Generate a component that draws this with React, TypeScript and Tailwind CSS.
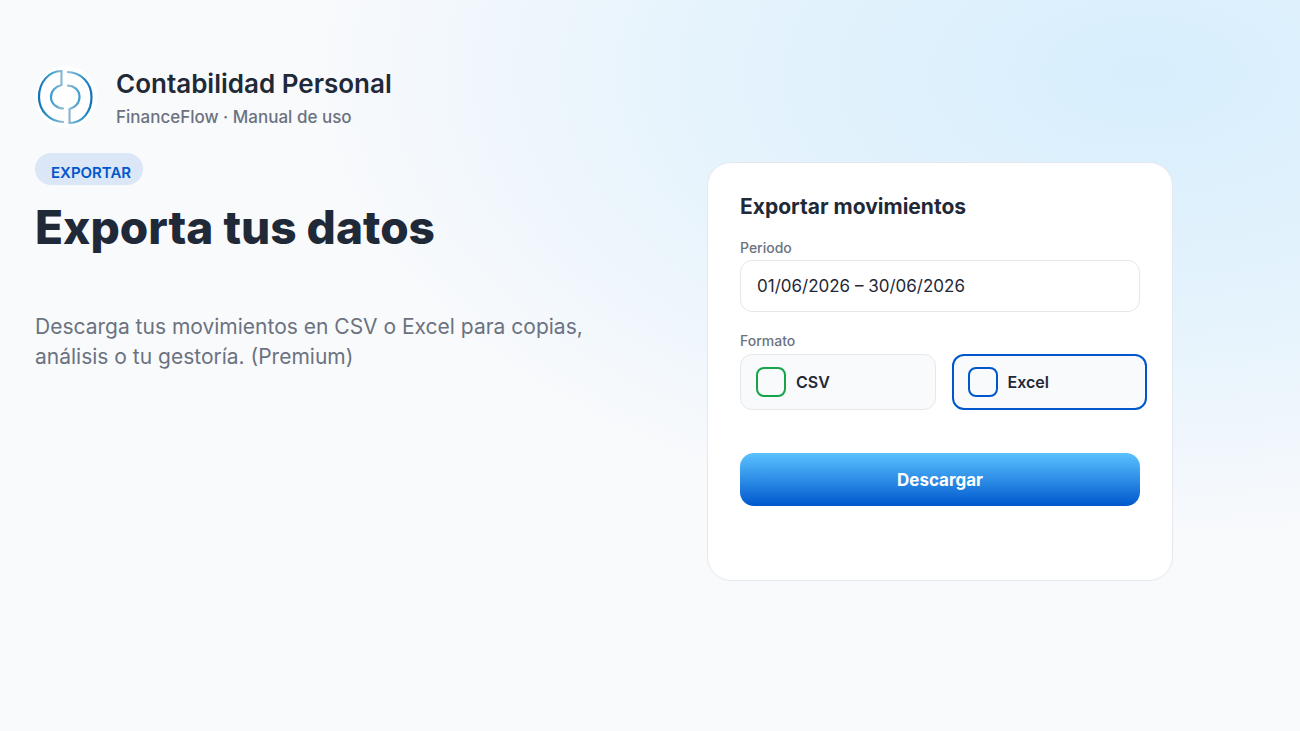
import { useState } from "react";

function Logo() {
  return (
    <svg viewBox="0 0 62 62" className="size-[62px] shrink-0" fill="none" aria-hidden="true">
      <defs>
        <linearGradient id="outerLeft" x1="0" y1="0" x2="1" y2="0">
          <stop offset="0" stopColor="#1273b5" />
          <stop offset="0.5" stopColor="#3f9fd0" />
          <stop offset="1" stopColor="#9dbdd2" />
        </linearGradient>
        <linearGradient id="outerRight" x1="1" y1="0" x2="0" y2="0">
          <stop offset="0" stopColor="#1273b5" />
          <stop offset="0.5" stopColor="#3f9fd0" />
          <stop offset="1" stopColor="#9dbdd2" />
        </linearGradient>
      </defs>
      <circle cx="31" cy="31" r="31" fill="#ffffff" />
      <path
        d="M29 56 C15 56 4 45 4 31 C4 16 14 5 26.5 5 L26.5 19 C20.500 20.500 16 25 16 31 C16 38 22 42.500 29 42.500"
        stroke="url(#outerLeft)"
        strokeWidth="2.2"
      />
      <path
        d="M32 6 C46 6 56.500 17 56.500 31 C56.500 46 47 57 34.500 57 L34.500 43 C40 41.500 44.500 37 44.500 31 C44.500 24 39 19.500 32 19.500"
        stroke="url(#outerRight)"
        strokeWidth="2.2"
      />
    </svg>
  );
}

const formats = [
  { id: "csv", label: "CSV", box: "border-[#16a34a]" },
  { id: "excel", label: "Excel", box: "border-[#0057cc]" },
];

export default function App() {
  const [selected, setSelected] = useState("excel");

  return (
    <main
      className="flex min-h-screen items-start justify-between bg-[#f9fafc] bg-[radial-gradient(ellipse_65%_65%_at_88%_10%,rgba(90,194,255,0.21),rgba(90,194,255,0.13)_50%,rgba(90,194,255,0))] pr-[127px] pl-[35px] text-[#1f2937]"
      style={{ fontFamily: 'Inter, "Liberation Sans", sans-serif' }}
    >
      <section className="flex-1 pt-[66px]">
        <header className="flex items-start gap-[19px]">
          <Logo />
          <div>
            <p className="text-[26px] leading-9 font-semibold">Contabilidad Personal</p>
            <p className="text-[17px] leading-[30px] font-medium text-[#6b7280]">FinanceFlow · Manual de uso</p>
          </div>
        </header>
        <p className="mt-[21px] flex h-8 w-fit items-end rounded-full bg-[#dbe6f7] pr-3 pl-4 text-[15px] leading-6 font-semibold text-[#0057cc]">
          EXPORTAR
        </p>
        <h1 className="mt-3 text-[46px] leading-[60px] font-extrabold">Exporta tus datos</h1>
        <p className="mt-[55px] max-w-[560px] text-[21px] leading-[30px] text-[#6b7280]">
          Descarga tus movimientos en CSV o Excel para copias, análisis o tu gestoría. (Premium)
        </p>
      </section>

      <form
        className="mt-[162px] w-[466px] rounded-3xl border border-[#e5e9ef] bg-white px-8 pt-[30px] pb-[74px]"
        onSubmit={(e) => e.preventDefault()}
      >
        <h2 className="text-[21px] leading-7 font-bold">Exportar movimientos</h2>
        <label htmlFor="periodo" className="mt-[15px] block text-sm leading-6 font-medium text-[#6b7280]">
          Periodo
        </label>
        <input
          id="periodo"
          type="text"
          defaultValue="01/06/2026 – 30/06/2026"
          className="block h-[52px] w-full rounded-xl border border-[#e5e7eb] bg-white px-4 text-[17px] text-[#1f2937]"
        />
        <fieldset className="mt-[17px]">
          <legend className="block text-sm leading-6 font-medium text-[#6b7280]">Formato</legend>
          <div className="-mr-[7px] mt-px grid grid-cols-2 gap-4">
            {formats.map((f) => (
              <label
                key={f.id}
                className={`flex h-14 items-center gap-2.5 rounded-xl bg-[#f9fafc] text-base font-semibold ${
                  selected === f.id ? "border-2 border-[#0057cc] px-3.5" : "border border-[#e5e7eb] px-[15px]"
                }`}
              >
                <input
                  type="radio"
                  name="formato"
                  value={f.id}
                  checked={selected === f.id}
                  onChange={() => setSelected(f.id)}
                  className={`size-[30px] shrink-0 appearance-none rounded-lg border-2 ${f.box}`}
                />
                {f.label}
              </label>
            ))}
          </div>
        </fieldset>
        <button
          type="submit"
          className="mt-[43px] block h-[53px] w-full rounded-[14px] bg-linear-to-b from-[#5ac2ff] to-[#0057cc] pt-0.5 text-[17px] font-bold text-white"
        >
          Descargar
        </button>
      </form>
    </main>
  );
}
